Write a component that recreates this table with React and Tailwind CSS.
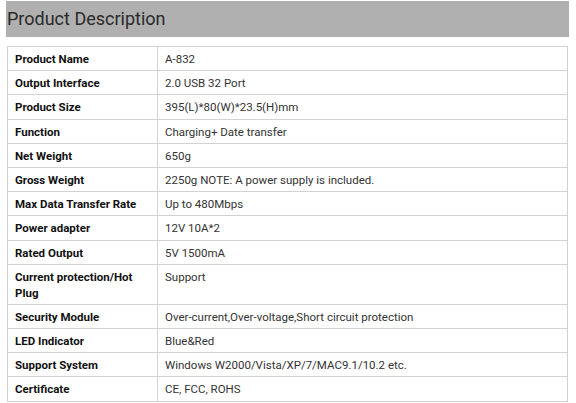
const rows = [
  ["Product Name", "A-832"],
  ["Output Interface", "2.0 USB 32 Port"],
  ["Product Size", "395(L)*80(W)*23.5(H)mm"],
  ["Function", "Charging+ Date transfer"],
  ["Net Weight", "650g"],
  ["Gross Weight", "2250g NOTE: A power supply is included."],
  ["Max Data Transfer Rate", "Up to 480Mbps"],
  ["Power adapter", "12V 10A*2"],
  ["Rated Output", "5V 1500mA"],
  ["Current protection/Hot Plug", "Support"],
  ["Security Module", "Over-current,Over-voltage,Short circuit protection"],
  ["LED Indicator", "Blue&Red"],
  ["Support System", "Windows W2000/Vista/XP/7/MAC9.1/10.2 etc."],
  ["Certificate", "CE, FCC, ROHS"],
];

export default function App() {
  return (
    <div className="min-h-[403px] w-[576px] bg-white font-['Roboto',sans-serif] pt-px">
      <div className="ml-[6px] mr-[7px] h-[36px] bg-[#b0b0b0] pl-px">
        <h2 className="text-[18px] leading-[36px] font-normal text-[#2a2a2a]">Product Description</h2>
      </div>
      <table className="mt-[9px] ml-[7px] w-[561px] border-collapse table-fixed text-[11.5px] leading-[16px]">
        <colgroup>
          <col className="w-[150px]" />
          <col />
        </colgroup>
        <tbody>
          {rows.map(([label, value]) => (
            <tr key={label}>
              <td className="border border-[#d2d2d2] px-[7px] pt-[4px] pb-[3.2px] align-top font-bold text-[#111]">
                {label}
              </td>
              <td className="border border-[#d2d2d2] px-[7px] pt-[4px] pb-[3.2px] align-top text-[#333]">
                {value}
              </td>
            </tr>
          ))}
        </tbody>
      </table>
    </div>
  );
}
